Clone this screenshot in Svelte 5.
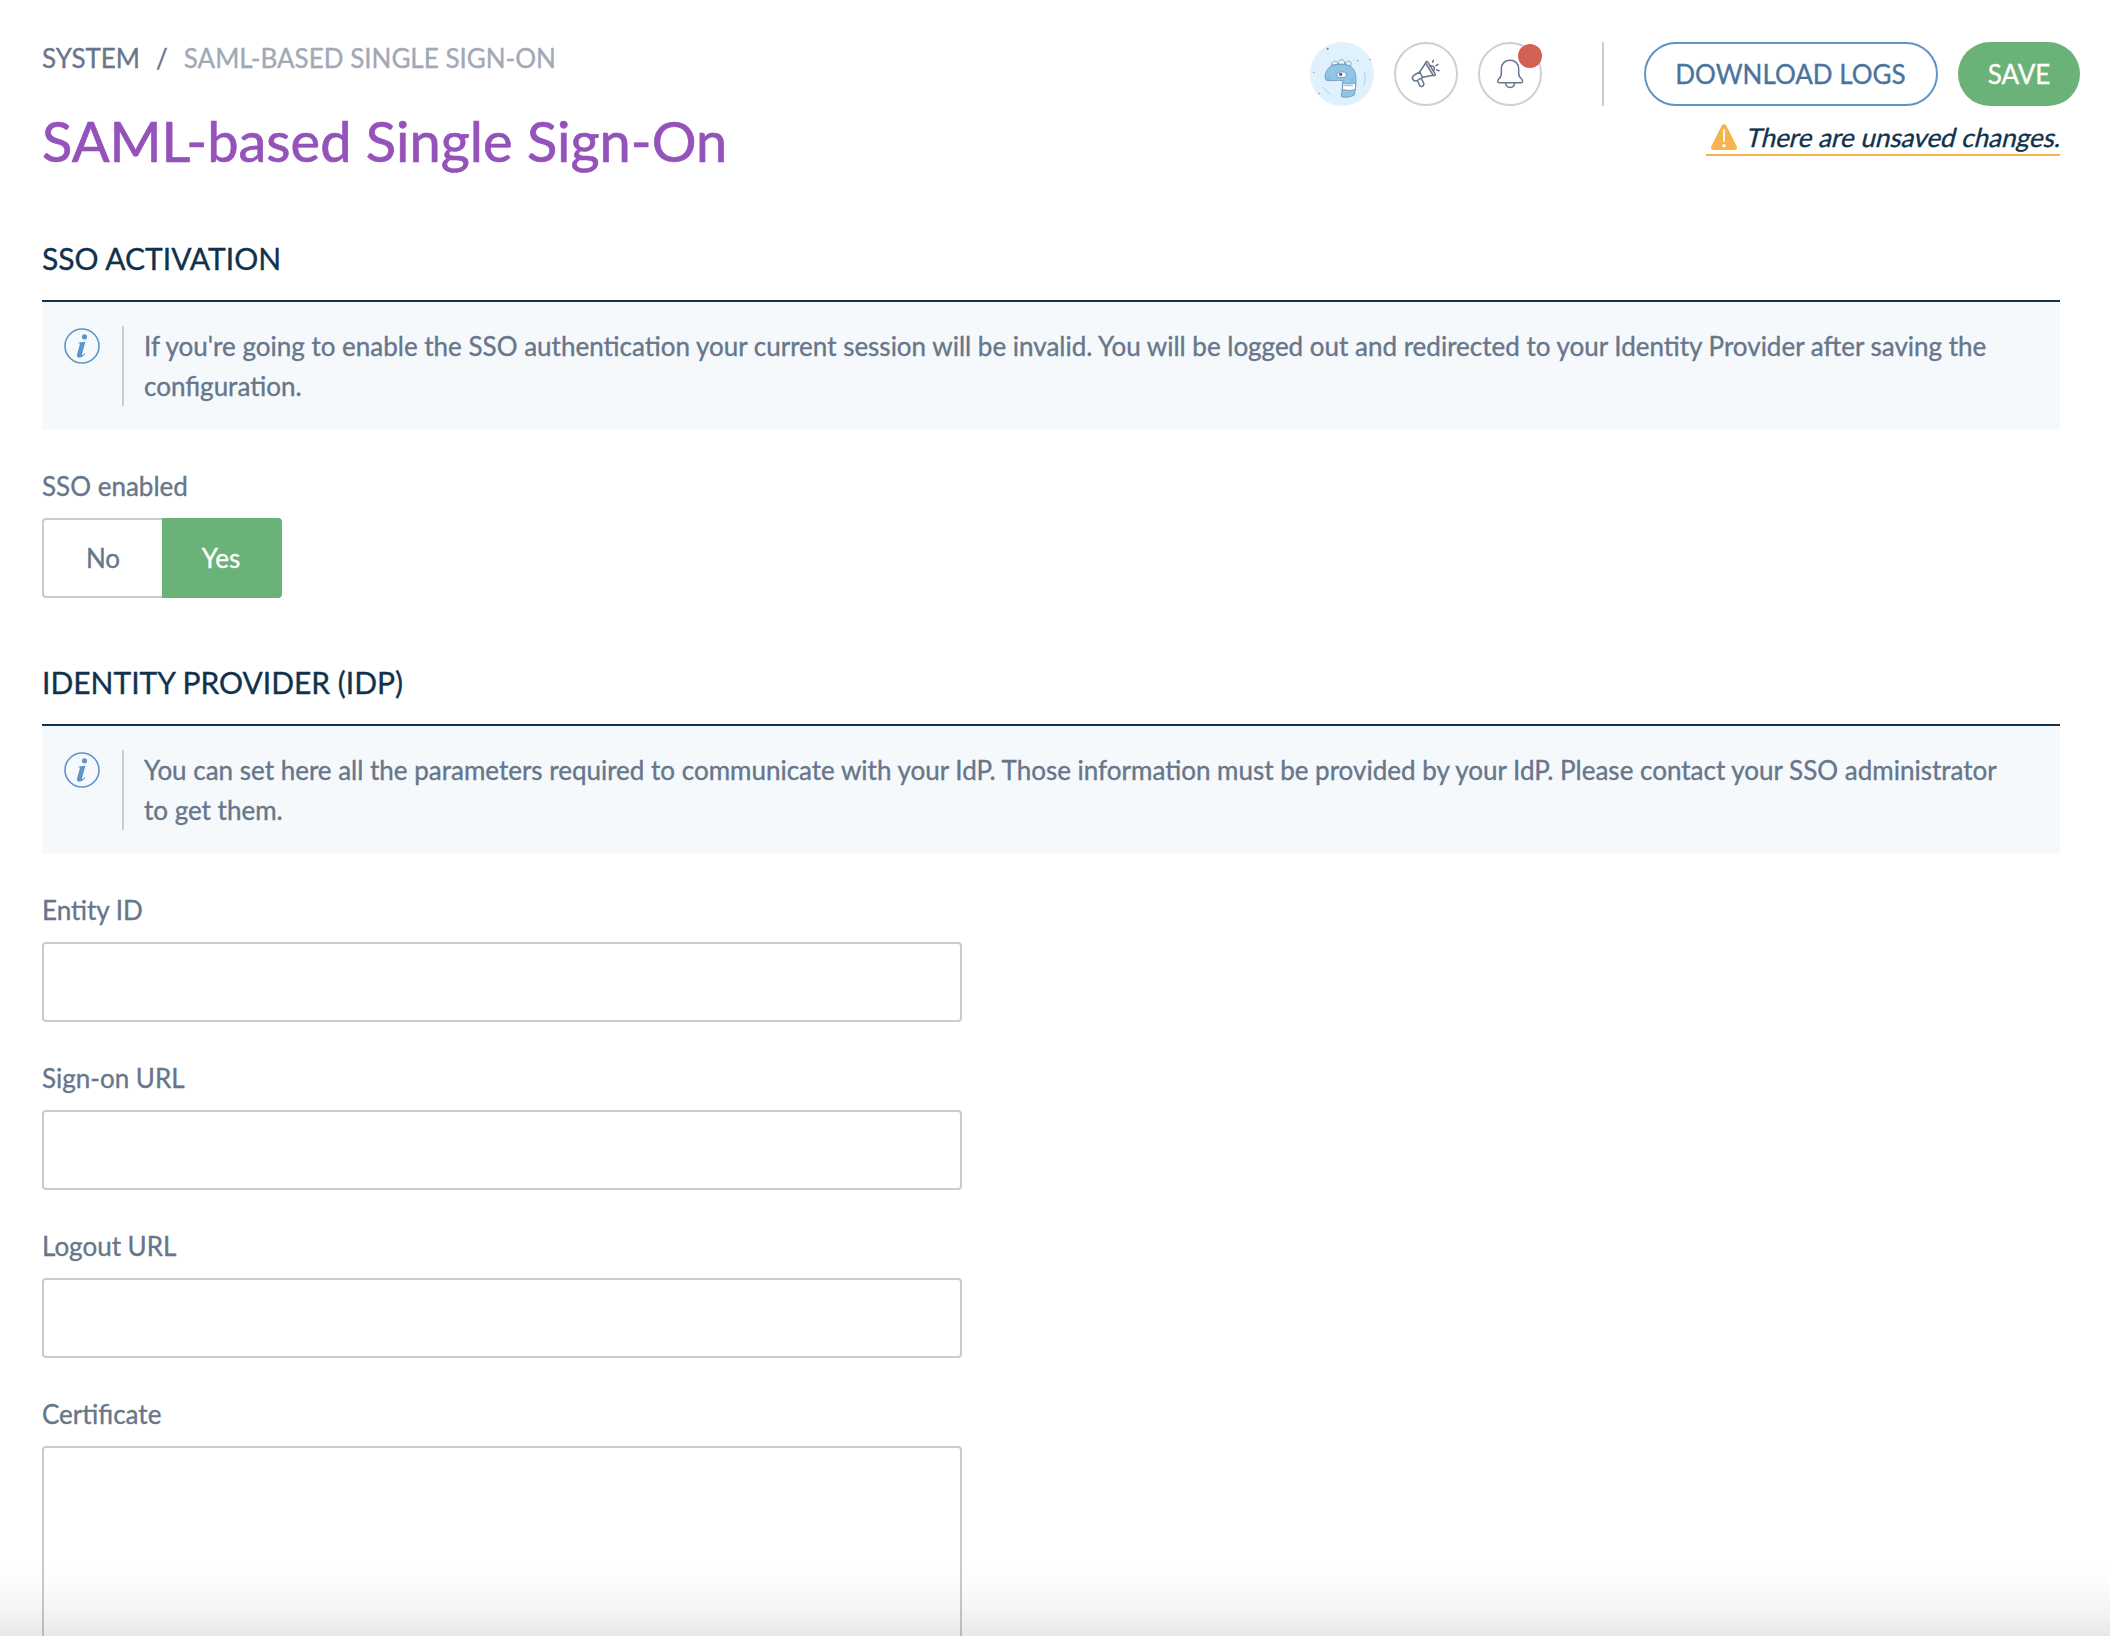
<script>
  const fields = ['Entity ID', 'Sign-on URL', 'Logout URL'];
  let enabled = $state(true);
</script>

{#snippet notice(text)}
  <div class="notice">
    <svg class="info" viewBox="0 0 36 36" aria-hidden="true">
      <circle cx="18" cy="18" r="17" fill="none" stroke="#5e94c8" stroke-width="1.6" />
      <circle cx="20.5" cy="8.8" r="2.6" fill="#5e94c8" />
      <path d="M14.5 14.6 L21.4 13.8 L18 26.2 C17.7 27.6 18.6 27.4 20.6 25.2 L21.2 25.7 C18.8 29.1 16.6 29.8 14.8 29.6 C12.9 29.4 12.6 28 13.1 26.2 L15.8 16.6 C16.1 15.5 15.7 15.3 14.3 15.3 Z" fill="#5e94c8" />
    </svg>
    <p>{text}</p>
  </div>
{/snippet}

<main>
  <header>
    <div class="heading">
      <nav><span>SYSTEM</span><span class="slash">/</span><span class="current">SAML-BASED SINGLE SIGN-ON</span></nav>
      <h1>SAML-based Single Sign-On</h1>
    </div>
    <div class="side">
      <div class="actions">
        <svg class="round" viewBox="0 0 192 192" aria-label="Profile">
          <circle cx="96" cy="96" r="96" fill="#e0f1fe" />
          <g stroke="#6d94b5" stroke-width="2.5" stroke-linejoin="round">
            <path d="M49 115 C42 108 45 91 55 79 C66 68 84 66 104 67 C128 69 138 88 138 112 C138 130 136 145 133 159 C121 166 108 167 94 164 L99 116 C82 113 67 118 49 115Z" fill="#91c5e6" />
            <path d="M64 69 C64 59 77 54 82 61 L84 67Z M84 66 C84 54 96 48 103 58 L104 67Z M106 67 C108 55 121 55 124 64 L120 72Z" fill="#e9f3fa" />
            <path d="M99 123 C111 127 124 127 137 123 L136 142 C123 147 110 146 97 142Z" fill="#fff" />
            <path d="M84 92 C92 88 103 90 109 93 L108 106 L85 106 C80 101 80 96 84 92Z" fill="#fff" />
          </g>
          <circle cx="92" cy="97" r="5" fill="#3c678b" />
          <path d="M101 130 L129 132 M51 110 L59 109 M120 111 L125 116 L130 111" fill="none" stroke="#73a8cc" stroke-width="2.5" />
          <path d="M163 91 C167 105 166 119 160 129 M39 135 C46 145 53 151 63 158" fill="none" stroke="#a5c5dd" stroke-width="2.5" />
          <g fill="#5884ae"><circle cx="53" cy="20" r="3" /><circle cx="180" cy="53" r="2" /><circle cx="143" cy="56" r="2" /><circle cx="11" cy="91" r="2" /><circle cx="28" cy="154" r="2" /></g>
        </svg>
        <svg class="round" viewBox="0 0 192 192" aria-label="Announcements">
          <circle cx="96" cy="96" r="93" fill="#fff" stroke="#cbd0d8" stroke-width="6" />
          <g fill="none" stroke="#67768a" stroke-width="4.5" stroke-linecap="round" stroke-linejoin="round">
            <path d="M77 90 L61 99 C49 107 58 121 70 115 L86 106 Z" />
            <path d="M77 90 L95 63 M86 106 L118 100" />
            <path d="M95 63 C94 59 99 57 102 61 L123 95 C126 100 120 103 117 99 Z" />
            <path d="M70 116 L77 130 C80 137 92 132 89 124 L82 109" />
            <path d="M108 72 C119 69 125 78 118 87" />
            <path d="M116 61 L118 55 M126 71 L132 67 M128 84 L135 86" />
          </g>
        </svg>
        <div class="bell">
          <svg class="round" viewBox="0 0 192 192" aria-label="Notifications">
            <circle cx="96" cy="96" r="93" fill="#fff" stroke="#cbd0d8" stroke-width="6" />
            <g fill="none" stroke="#67768a" stroke-width="4.5" stroke-linejoin="round">
              <path d="M64 122 C58 122 58 115 62 111 C68 107 70 101 70 94 V80 C70 65 81 55 96 55 S122 65 122 80 V94 C122 101 125 107 131 111 C135 115 135 122 129 122 Z" />
              <path d="M83 122 C84 141 109 141 110 122" />
            </g>
          </svg>
          <span class="badge"></span>
        </div>
        <span class="divider"></span>
        <button class="pill outline">DOWNLOAD LOGS</button>
        <button class="pill solid">SAVE</button>
      </div>
      <div class="unsaved">
        <svg viewBox="0 0 26 26" aria-hidden="true">
          <path d="M10.6 1.8 Q13 -1.6 15.4 1.8 L25.6 22 Q27 26 23 26 H3 Q-1 26 0.4 22 Z" fill="#f6b44e" />
          <path d="M13 6 V17" stroke="#fff" stroke-width="1.8" stroke-linecap="round" />
          <circle cx="13" cy="21.8" r="1.7" fill="#fff" />
        </svg>
        <span class="slanted">There are unsaved changes.</span>
      </div>
    </div>
  </header>

  <section>
    <h2>SSO ACTIVATION</h2>
    {@render notice("If you're going to enable the SSO authentication your current session will be invalid. You will be logged out and redirected to your Identity Provider after saving the configuration.")}
    <div class="field">
      <span class="label">SSO enabled</span>
      <div class="toggle">
        <button class:on={!enabled} onclick={() => (enabled = false)}>No</button>
        <button class:on={enabled} onclick={() => (enabled = true)}>Yes</button>
      </div>
    </div>
  </section>

  <section>
    <h2>IDENTITY PROVIDER (IDP)</h2>
    {@render notice('You can set here all the parameters required to communicate with your IdP. Those information must be provided by your IdP. Please contact your SSO administrator to get them.')}
    {#each fields as name}
      <label class="field">
        <span class="label">{name}</span>
        <input type="text" />
      </label>
    {/each}
    <label class="field">
      <span class="label">Certificate</span>
      <textarea></textarea>
    </label>
  </section>
</main>
<div class="fade"></div>

<style>
  :global(body) { background: #fff; overflow: hidden; }
  main {
    box-sizing: border-box;
    height: 1636px;
    overflow: hidden;
    padding: 42px 50px 0 42px;
    font: 26px/32px Lato, "Liberation Sans", sans-serif;
    color: #67768a;
    -webkit-text-stroke: 0.35px currentColor;
  }
  h1, h2, p { margin: 0; font-weight: 400; }
  button { font: inherit; padding: 0; cursor: pointer; }
  header { display: flex; justify-content: space-between; height: 130px; }
  nav { display: flex; white-space: nowrap; }
  .slash { margin: 0 16px; }
  .current { color: #a1a9b7; }
  h1 { margin-top: 35px; font-size: 56px; line-height: 64px; color: #9452ba; white-space: nowrap; -webkit-text-stroke-width: 0.7px; }
  .side { display: flex; flex-direction: column; align-items: flex-end; }
  .actions { display: flex; gap: 20px; margin-right: -20px; }
  .round { display: block; width: 64px; height: 64px; }
  .bell { position: relative; }
  .badge { position: absolute; top: 2px; right: 0; width: 24px; height: 24px; border-radius: 50%; background: #d16152; }
  .divider { width: 2px; height: 64px; margin: 0 20px 0 40px; background: #c7cbd4; }
  .pill { box-sizing: border-box; height: 64px; border-radius: 32px; white-space: nowrap; }
  .outline { width: 294px; padding-right: 1px; border: 2px solid #5e94c8; background: #fff; color: #4a749e; }
  .solid { width: 122px; border: 0; background: #6bb278; color: #fff; }
  .unsaved {
    box-sizing: border-box;
    display: flex;
    align-items: center;
    justify-content: space-between;
    width: 354px;
    height: 36px;
    margin: 14px 0 0;
    padding-left: 5px;
    border-bottom: 2px solid #f6b44e;
    color: #11324d;
    white-space: nowrap;
  }
  .unsaved svg { width: 26px; height: 26px; }
  .slanted { transform: skewX(-14deg); transform-origin: 0 26px; }
  section { margin-top: 64px; }
  section + section { margin-top: 62px; }
  h2 { padding-bottom: 20px; border-bottom: 2px solid #11324d; font-size: 30px; line-height: 44px; color: #11324d; }
  .notice { display: flex; padding: 24px 44px 24px 22px; background: #f5f9fc; }
  .info { flex: none; width: 36px; height: 36px; margin: 2px 22px 0 0; }
  .notice p { padding-left: 20px; border-left: 2px solid #c7cbd4; line-height: 40px; }
  .field { display: block; margin-top: 40px; }
  .label { display: block; margin-bottom: 16px; }
  .toggle { display: flex; width: 240px; height: 80px; }
  .toggle button { box-sizing: border-box; width: 120px; border: 2px solid #c7cbd4; background: #fff; color: #67768a; }
  .toggle button:first-child { border-right: 0; border-radius: 4px 0 0 4px; }
  .toggle button:last-child { border-left: 0; border-radius: 0 4px 4px 0; }
  .toggle .on { border-color: #6bb278; background: #6bb278; color: #fff; }
  input, textarea {
    box-sizing: border-box;
    display: block;
    width: 920px;
    height: 80px;
    border: 2px solid #c7cbd4;
    border-radius: 4px;
    background: #fff;
    font: inherit;
    resize: none;
    outline: 0;
  }
  textarea { height: 240px; }
  .fade {
    position: fixed;
    inset: auto 0 0;
    height: 80px;
    background: linear-gradient(transparent, rgba(0, 0, 0, 0.012) 35%, rgba(0, 0, 0, 0.045) 68%, rgba(0, 0, 0, 0.09));
    pointer-events: none;
  }
</style>
